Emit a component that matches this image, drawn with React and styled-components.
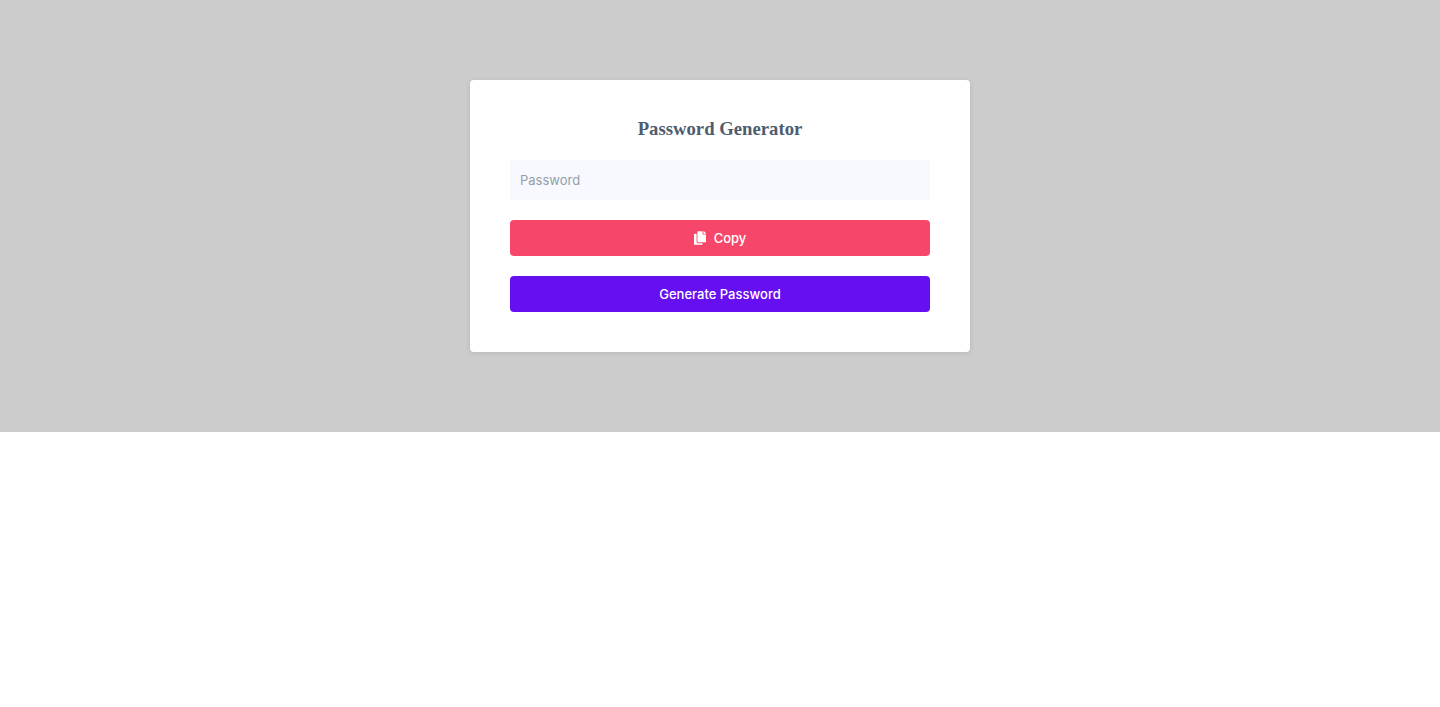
import React, { useState } from "react";
import styled, { createGlobalStyle } from "styled-components";
import { FaCopy } from "react-icons/fa";

const GlobalStyle = createGlobalStyle`
  * { box-sizing: border-box; }
  body {
    margin: 0;
    background: #fff;
    font-family: "Liberation Serif", serif;
  }
`;

const Page = styled.main`
  padding: 80px 16px;
  background: #ccc;
`;

const Card = styled.form`
  display: flex;
  flex-direction: column;
  gap: 20px;
  max-width: 500px;
  margin: 0 auto;
  padding: 38px 40px 40px;
  border-radius: 4px;
  background: #fff;
  box-shadow: 0 1px 5px rgba(0, 0, 0, 0.1);
`;

const Title = styled.h3`
  margin: 0;
  color: #4e5d6e;
  line-height: 22px;
  text-align: center;
`;

const PasswordInput = styled.input`
  width: 100%;
  height: 40px;
  padding: 0 10px;
  border: 0;
  background: #f8f9fe;
  color: #4e5d6e;
  font: 400 13px Inter, sans-serif;
  &::placeholder { color: #939fa8; opacity: 1; }
`;

const Button = styled.button`
  display: flex;
  align-items: center;
  justify-content: center;
  gap: 8px;
  width: 100%;
  height: 36px;
  padding: 0;
  border: 0;
  border-radius: 4px;
  background: ${(p) => (p.$tone === "copy" ? "#f6476b" : "#6610f2")};
  color: #fff;
  font: 500 13px Inter, sans-serif;
  cursor: pointer;
`;

const CopyIcon = styled(FaCopy)`
  width: 12px;
  height: 14px;
`;

const makePassword = () => {
  const chars = "ABCDEFGHJKLMNPQRSTUVWXYZabcdefghijkmnopqrstuvwxyz23456789!@#$%";
  const values = crypto.getRandomValues(new Uint32Array(14));
  return Array.from(values, (v) => chars[v % chars.length]).join("");
};

export default function App() {
  const [password, setPassword] = useState("");
  return (
    <>
      <GlobalStyle />
      <Page>
        <Card onSubmit={(e) => e.preventDefault()}>
          <Title>Password Generator</Title>
          <PasswordInput
            type="text"
            placeholder="Password"
            aria-label="Password"
            value={password}
            onChange={(e) => setPassword(e.target.value)}
          />
          <Button
            type="button"
            $tone="copy"
            onClick={() => navigator.clipboard?.writeText(password)}
          >
            <CopyIcon aria-hidden="true" />
            Copy
          </Button>
          <Button type="button" $tone="generate" onClick={() => setPassword(makePassword())}>
            Generate Password
          </Button>
        </Card>
      </Page>
    </>
  );
}
